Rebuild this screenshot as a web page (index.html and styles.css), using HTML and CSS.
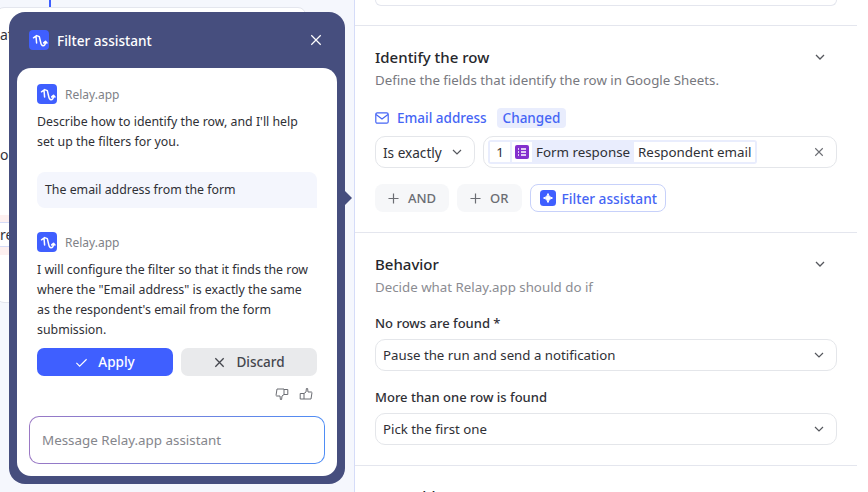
FILE: index.html
```html
<!DOCTYPE html>
<html lang="en">
<head>
    <title>Filter assistant</title>
    <meta charset="utf-8"/>
    <link rel="stylesheet" href="styles.css">
</head>
<body>
<div class="canvas">
    <div class="line"></div>
    <div class="bgcard">
        <div class="bgtext bg1">at</div>
        <div class="bgtext bg2">oo</div>
        <div class="bgband"><div class="bgrow"><span class="bgtext">re</span></div></div>
    </div>

    <div class="assistant">
        <div class="assistant-head">
            <svg class="logo logo-head" viewBox="0 0 20 20"><rect width="20" height="20" rx="4" fill="#3f5fff"/><path d="M4.5 7.8 L7.6 5.6 L10.3 6.6 L11.6 12 Q12.2 15.8 14 15.8 Q16.4 15.8 16.5 11.5 M14.7 12.9 L16.5 11.2 L18 13 M7 6 L7.6 13" fill="none" stroke="#fff" stroke-width="1.5" stroke-linecap="round" stroke-linejoin="round"/></svg>
            <span class="assistant-title">Filter assistant</span>
            <svg class="head-close" viewBox="0 0 14 14"><path d="M1.5 1.5 L12.5 12.5 M12.5 1.5 L1.5 12.5" fill="none" stroke="#fff" stroke-width="1.4"/></svg>
        </div>
        <div class="assistant-body">
            <div class="who">
                <svg class="logo" viewBox="0 0 20 20"><rect width="20" height="20" rx="4" fill="#3f5fff"/><path d="M4.5 7.8 L7.6 5.6 L10.3 6.6 L11.6 12 Q12.2 15.8 14 15.8 Q16.4 15.8 16.5 11.5 M14.7 12.9 L16.5 11.2 L18 13 M7 6 L7.6 13" fill="none" stroke="#fff" stroke-width="1.5" stroke-linecap="round" stroke-linejoin="round"/></svg>
                <span>Relay.app</span>
            </div>
            <p class="msg">Describe how to identify the row, and I'll help<br>set up the filters for you.</p>
            <div class="mine">The email address from the form</div>
            <div class="who">
                <svg class="logo" viewBox="0 0 20 20"><rect width="20" height="20" rx="4" fill="#3f5fff"/><path d="M4.5 7.8 L7.6 5.6 L10.3 6.6 L11.6 12 Q12.2 15.8 14 15.8 Q16.4 15.8 16.5 11.5 M14.7 12.9 L16.5 11.2 L18 13 M7 6 L7.6 13" fill="none" stroke="#fff" stroke-width="1.5" stroke-linecap="round" stroke-linejoin="round"/></svg>
                <span>Relay.app</span>
            </div>
            <p class="msg">I will configure the filter so that it finds the row<br>where the "Email address" is exactly the same<br>as the respondent's email from the form<br>submission.</p>
            <div class="actions">
                <div class="btn btn-apply">
                    <svg class="btn-icon" viewBox="0 0 14 14"><path d="M1.5 7.5 L5 11 L12.5 3.5" fill="none" stroke="#fff" stroke-width="1.2"/></svg>
                    Apply
                </div>
                <div class="btn btn-discard">
                    <svg class="btn-icon" viewBox="0 0 14 14"><path d="M2.5 2.5 L11.5 11.5 M11.5 2.5 L2.5 11.5" fill="none" stroke="#44464d" stroke-width="1.4"/></svg>
                    Discard
                </div>
            </div>
            <div class="thumbs">
                <svg viewBox="0 0 14 14"><path d="M1 8.5 L2 2 H9 V7.5 L7 9 L6.6 12.5 H5.4 L5 9 H1.6 Z M9 2.5 H12.8 V7.5 H9" fill="none" stroke="#6b6d73" stroke-width="1" stroke-linejoin="round"/></svg>
                <svg viewBox="0 0 14 14"><path d="M13 5.5 L12 12 H5 V6.5 L7 5 L7.4 1.5 H8.6 L9 5 H12.4 Z M5 6.5 H1.2 V12 H5" fill="none" stroke="#6b6d73" stroke-width="1" stroke-linejoin="round"/></svg>
            </div>
            <div class="composer"><div class="composer-in">Message Relay.app assistant</div></div>
        </div>
    </div>
    <div class="arrow"></div>
</div>

<div class="panel">
    <div class="stub"></div>
    <div class="section section-row">
        <div class="section-head">
            <h2>Identify the row</h2>
            <svg class="chev" viewBox="0 0 12 12"><path d="M2 4 L6 8 L10 4" fill="none" stroke="#55575d" stroke-width="1.3"/></svg>
        </div>
        <div class="desc">Define the fields that identify the row in Google Sheets.</div>
        <div class="field-label">
            <svg class="mail" viewBox="0 0 14 12"><rect x="0.8" y="0.8" width="12.4" height="10.4" rx="1.5" fill="none" stroke="#4565f5" stroke-width="1.2"/><path d="M1 2.5 L7 7 L13 2.5" fill="none" stroke="#4565f5" stroke-width="1.2"/></svg>
            <span>Email address</span>
            <span class="changed">Changed</span>
        </div>
        <div class="filter">
            <div class="box box-op">Is exactly
                <svg class="chev" viewBox="0 0 12 12"><path d="M2 4 L6 8 L10 4" fill="none" stroke="#55575d" stroke-width="1.2"/></svg>
            </div>
            <div class="box box-value">
                <div class="token">
                    <span class="tok-num">1</span>
                    <span class="tok-icon"><svg viewBox="0 0 14 14"><rect width="14" height="14" rx="2" fill="#8430ce"/><path d="M3 4 H4 M6 4 H11 M3 7 H4 M6 7 H11 M3 10 H4 M6 10 H11" stroke="#fff" stroke-width="1.3"/></svg></span>
                    <span class="tok-src">Form response</span>
                    <span class="tok-field">Respondent email</span>
                </div>
                <svg class="clear" viewBox="0 0 12 12"><path d="M1.5 1.5 L10.5 10.5 M10.5 1.5 L1.5 10.5" fill="none" stroke="#6b6d73" stroke-width="1.3"/></svg>
            </div>
        </div>
        <div class="ops">
            <div class="op op-and"><svg viewBox="0 0 12 12"><path d="M6 0.5 V11.5 M0.5 6 H11.5" stroke="#6b6d73" stroke-width="1.3"/></svg>AND</div>
            <div class="op op-or"><svg viewBox="0 0 12 12"><path d="M6 0.5 V11.5 M0.5 6 H11.5" stroke="#6b6d73" stroke-width="1.3"/></svg>OR</div>
            <div class="op-assist">
                <svg viewBox="0 0 16 16"><rect width="16" height="16" rx="3.5" fill="#3f5fff"/><path d="M8 3.5 Q8.6 7.4 12.5 8 Q8.6 8.6 8 12.5 Q7.4 8.6 3.5 8 Q7.4 7.4 8 3.5 Z" fill="#fff" stroke="#fff"/></svg>
                Filter assistant
            </div>
        </div>
    </div>
    <div class="section section-behavior">
        <div class="section-head">
            <h2>Behavior</h2>
            <svg class="chev" viewBox="0 0 12 12"><path d="M2 4 L6 8 L10 4" fill="none" stroke="#55575d" stroke-width="1.3"/></svg>
        </div>
        <div class="desc desc-light">Decide what Relay.app should do if</div>
        <div class="label label-first">No rows are found *</div>
        <div class="box box-select">Pause the run and send a notification
            <svg class="chev" viewBox="0 0 12 12"><path d="M2 4 L6 8 L10 4" fill="none" stroke="#55575d" stroke-width="1.2"/></svg>
        </div>
        <div class="label">More than one row is found</div>
        <div class="box box-select">Pick the first one
            <svg class="chev" viewBox="0 0 12 12"><path d="M2 4 L6 8 L10 4" fill="none" stroke="#55575d" stroke-width="1.2"/></svg>
        </div>
    </div>
    <div class="section section-last">
        <h2>Assemble</h2>
    </div>
</div>
</body>
</html>
```

FILE: styles.css
```css
* {
    box-sizing: border-box;
}

html, body {
    height: 492px;
    overflow: hidden;
}

body {
    margin: 0;
    padding: 0;
    display: flex;
    background: #f5f7fd;
    font-family: "Noto Sans", "Open Sans", sans-serif;
    font-size: 13px;
    color: #2f3036;
}

/* left side: the flow canvas with the assistant floating on top */
.canvas {
    position: relative;
    width: 354px;
    height: 492px;
    flex: none;
}

.line {
    position: absolute;
    left: 49px;
    top: 0;
    width: 2px;
    height: 7px;
    background: #3f5fff;
}

.bgcard {
    position: absolute;
    left: -4px;
    top: 7px;
    width: 310px;
    height: 296px;
    background: #fff;
    border: 1px solid #e4e6ee;
    border-radius: 8px;
}

.bgtext {
    position: absolute;
    left: 3px;
    font-size: 14px;
    color: #33343a;
}

.bg1 { top: 17px; }
.bg2 { top: 137px; }

.bgband {
    position: absolute;
    left: 0;
    top: 207px;
    width: 100%;
    height: 40px;
    padding: 7px 0 8px;
    background: #fdf0f0;
}

.bgrow {
    position: relative;
    height: 25px;
    background: #fff;
    border-top: 1px solid #d5dcf8;
    border-bottom: 1px solid #d5dcf8;
}

.bgrow .bgtext {
    top: 2px;
    left: 3px;
}

.assistant {
    position: absolute;
    left: 9px;
    top: 12px;
    width: 336px;
    height: 472px;
    background: #464e7e;
    border-radius: 16px;
    padding: 0 8px 8px;
    display: flex;
    flex-direction: column;
}

.assistant-head {
    height: 56px;
    flex: none;
    display: flex;
    align-items: center;
    padding: 0 15px 0 12px;
    color: #fff;
}

.logo {
    width: 20px;
    height: 20px;
    flex: none;
}

.assistant-title {
    margin-left: 8px;
    font-size: 13.6px;
    font-weight: 500;
}

.head-close {
    margin-left: auto;
    width: 12px;
    height: 12px;
}

.assistant-body {
    flex: 1;
    background: #fff;
    border-radius: 14px;
    padding: 16px 20px 0;
}

.who {
    display: flex;
    align-items: center;
    gap: 8px;
    height: 20px;
    font-size: 12px;
    color: #808187;
}

.msg {
    margin: 8px 0 0;
    font-size: 12.35px;
    line-height: 20px;
}

.mine {
    margin: 20px 0 24px;
    height: 36px;
    line-height: 36px;
    padding: 0 8px;
    background: #f4f6fd;
    border-radius: 8px 8px 0 8px;
    font-size: 12.35px;
}

.actions {
    display: flex;
    gap: 8px;
    margin-top: 8px;
}

.btn {
    flex: 1;
    height: 28px;
    border-radius: 7px;
    display: flex;
    align-items: center;
    justify-content: center;
    gap: 10px;
    font-size: 13.5px;
    font-weight: 500;
}

.btn-apply {
    background: #3f5fff;
    color: #fff;
}

.btn-discard {
    background: #e9eaec;
    color: #44464d;
}

.btn-icon {
    width: 13px;
    height: 13px;
}

.thumbs {
    display: flex;
    justify-content: flex-end;
    gap: 10px;
    margin-top: 11px;
    padding-right: 4px;
}

.thumbs svg {
    width: 14px;
    height: 14px;
}

.composer {
    margin: 15px -8px 0;
    height: 48px;
    padding: 1px;
    border-radius: 10px;
    background: linear-gradient(90deg, #9a78c4, #4f8df5);
}

.composer-in {
    height: 46px;
    line-height: 46px;
    padding: 0 12px;
    background: #fff;
    border-radius: 9px;
    color: #85868c;
    font-size: 13.4px;
}

.arrow {
    position: absolute;
    left: 345px;
    top: 191px;
    width: 0;
    height: 0;
    border-left: 7px solid #464e7e;
    border-top: 7px solid transparent;
    border-bottom: 7px solid transparent;
}

/* right side: step settings */
.panel {
    width: 514px;
    height: 492px;
    flex: none;
    background: #fff;
    border-left: 1px solid #d5dcf8;
    overflow: hidden;
}

.stub {
    height: 26px;
    margin-right: 11px;
    padding: 0 20px;
    border-bottom: 1px solid #e4e6ee;
}

.stub::before {
    content: "";
    display: block;
    height: 5px;
    border: 1px solid #e4e6ee;
    border-top: 0;
    border-radius: 0 0 8px 8px;
}

.section {
    margin-right: 11px;
    padding: 0 20px;
    border-bottom: 1px solid #e4e6ee;
}

.section-row {
    height: 207px;
    padding-top: 21px;
}

.section-behavior {
    height: 233px;
    padding-top: 21px;
}

.section-last {
    border-bottom: 0;
    padding-top: 20px;
}

.section-head {
    display: flex;
    align-items: center;
    justify-content: space-between;
    height: 20px;
    padding-right: 11px;
}

h2 {
    margin: 0;
    font-size: 15px;
    font-weight: 500;
    color: #26272c;
}

.chev {
    width: 12px;
    height: 12px;
    flex: none;
}

.desc {
    margin-top: 3px;
    height: 20px;
    line-height: 20px;
    font-size: 13.3px;
    color: #77787e;
}

.desc-light {
    color: #8b8c92;
}

.field-label {
    display: flex;
    align-items: center;
    margin-top: 18px;
    height: 20px;
    color: #4565f5;
    font-size: 13.5px;
    font-weight: 500;
}

.mail {
    width: 14px;
    height: 12px;
    margin-right: 8px;
}

.changed {
    margin-left: 10px;
    padding: 0 6px;
    height: 20px;
    line-height: 20px;
    background: #e9edfd;
    border-radius: 4px;
}

.filter {
    display: flex;
    gap: 8px;
    margin-top: 8px;
}

.box {
    height: 32px;
    border: 1px solid #e4e6ea;
    border-radius: 10px;
    display: flex;
    align-items: center;
    background: #fff;
    font-size: 13.25px;
}

.box-op {
    width: 100px;
    padding: 0 11px 0 7px;
    justify-content: space-between;
    font-size: 13.6px;
}

.box-value {
    flex: 1;
    padding: 0 4px;
    justify-content: space-between;
}

.token {
    display: flex;
    align-items: center;
    height: 24px;
    padding: 2px;
    gap: 2px;
    background: #e9edfd;
    border-radius: 3px;
    font-size: 13.35px;
    white-space: nowrap;
}

.tok-num {
    width: 20px;
    height: 20px;
    line-height: 20px;
    text-align: center;
    background: #fff;
}

.tok-icon {
    width: 20px;
    height: 20px;
    background: #fff;
    display: flex;
    align-items: center;
    justify-content: center;
}

.tok-icon svg {
    width: 14px;
    height: 14px;
}

.tok-src {
    margin: 0 2px;
}

.tok-field {
    height: 20px;
    line-height: 20px;
    padding: 0 4px;
    background: #fff;
}

.clear {
    width: 10px;
    height: 10px;
    margin-right: 8px;
}

.ops {
    display: flex;
    gap: 8px;
    margin-top: 16px;
}

.op {
    height: 28px;
    border-radius: 8px;
    background: #f6f7f9;
    color: #6b6d73;
    display: flex;
    align-items: center;
    gap: 9px;
    padding: 0 13px;
    font-weight: 500;
}

.op svg {
    width: 11px;
    height: 11px;
}

.op-assist {
    height: 28px;
    border: 1px solid #c7d1fa;
    border-radius: 8px;
    color: #4565f5;
    display: flex;
    align-items: center;
    gap: 6px;
    padding: 0 8px 0 9px;
    font-size: 13.7px;
    font-weight: 500;
}

.op-assist svg {
    width: 16px;
    height: 16px;
}

.label {
    margin-top: 16px;
    height: 20px;
    line-height: 20px;
    margin-bottom: 6px;
    font-weight: 500;
    color: #2f3036;
}

.label-first {
    margin-top: 16px;
}

.box-select {
    padding: 0 11px 0 7px;
    justify-content: space-between;
}
```
